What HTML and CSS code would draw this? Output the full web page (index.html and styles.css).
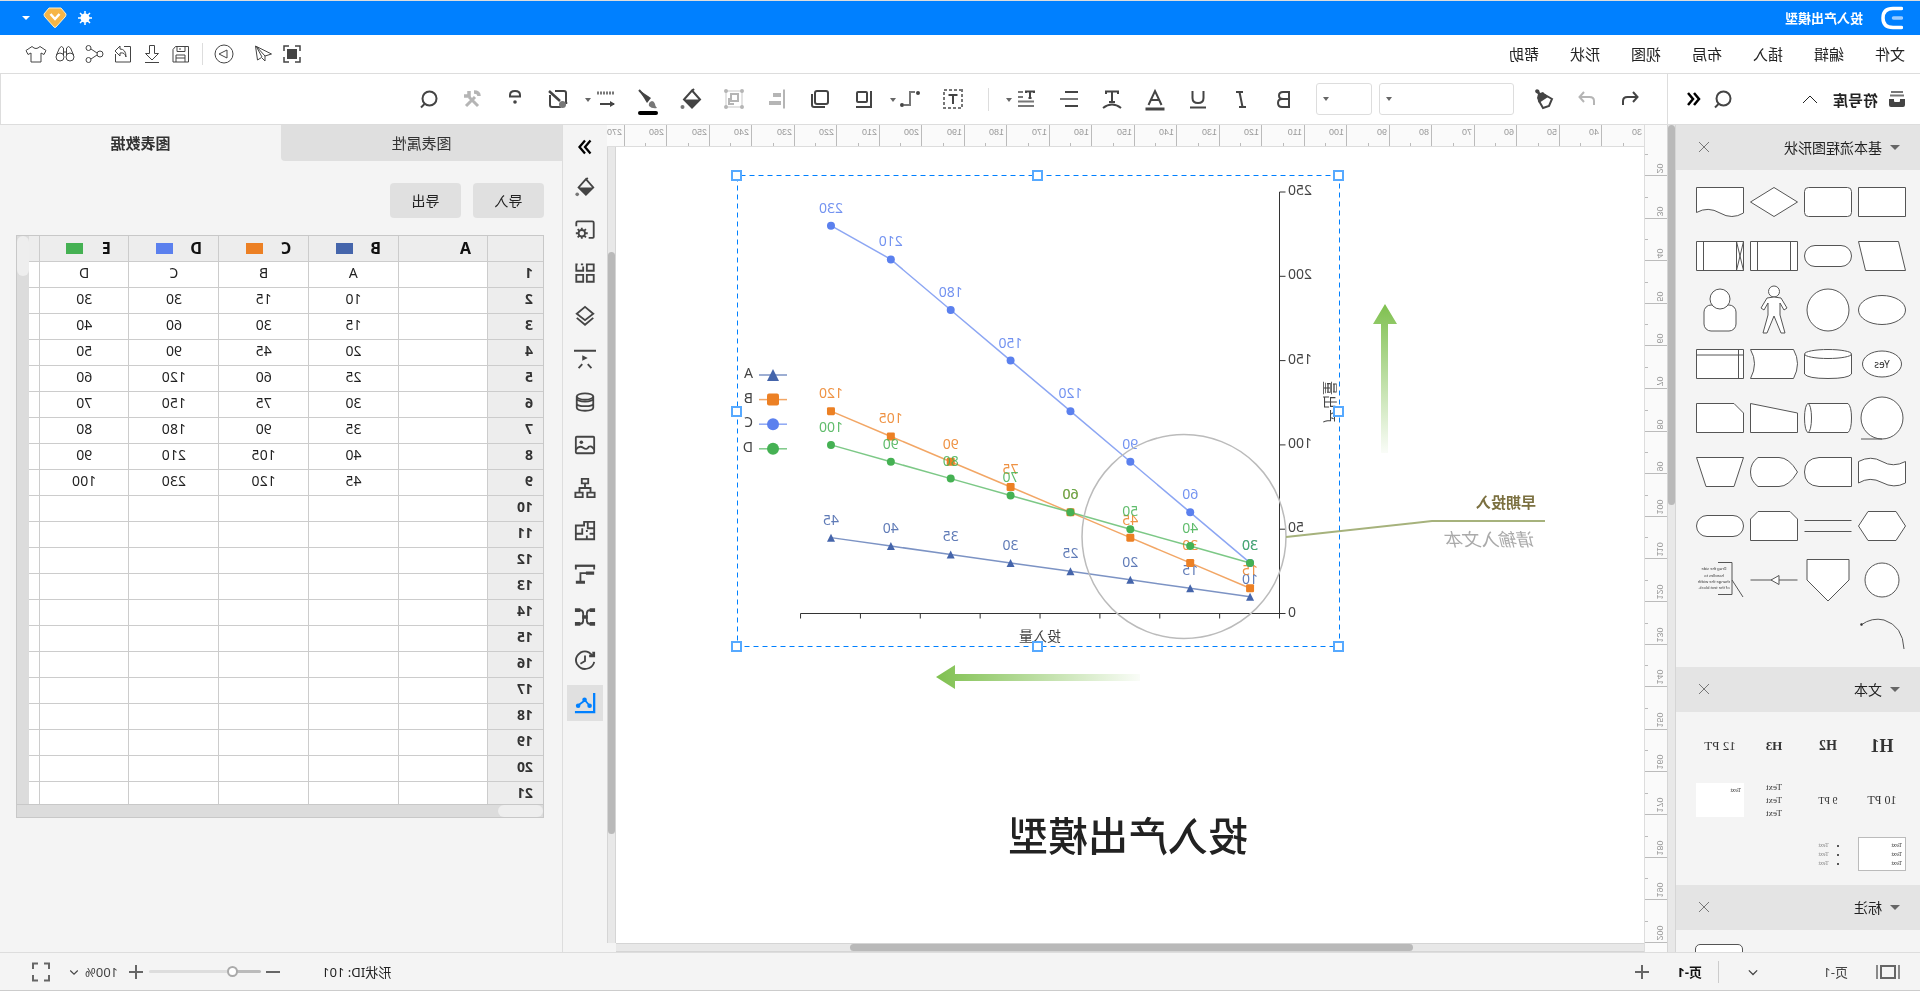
FILE: index.html
```html
<!DOCTYPE html>
<html lang="zh-CN">
<head>
<meta charset="utf-8">
<title>投入产出模型</title>
<link rel="stylesheet" href="styles.css">
</head>
<body>
<svg class="sprite" aria-hidden="true">
  <defs>
    <linearGradient id="gUp" x1="0" y1="0" x2="0" y2="1"><stop offset="0" stop-color="#7fc04f"/><stop offset="1" stop-color="#7fc04f" stop-opacity="0.04"/></linearGradient>
    <linearGradient id="gRight" x1="1" y1="0" x2="0" y2="0"><stop offset="0" stop-color="#7fc04f"/><stop offset="1" stop-color="#7fc04f" stop-opacity="0.04"/></linearGradient>
  </defs>
  <symbol id="i-undo" viewBox="0 0 24 24"><path d="M9 5 4.500 10 9 15M5 10h9.500q4.500 0 4.500 4v4"/></symbol>
  <symbol id="i-redo" viewBox="0 0 24 24"><path d="M15 5 19.500 10 15 15M19 10H9.500Q5 10 5 14v4"/></symbol>
  <symbol id="i-painter" viewBox="0 0 24 24"><path d="M4 12 11 8l6 6-4 7-6-2Z"/><path class="f" d="m8 10 5-5 3 1 1-3q3-2 4 1 0 2-3 3l1 4-2 5Z"/></symbol>
  <symbol id="i-b" viewBox="0 0 24 24"><path d="M7 5h6q4 0 4 3.500T13 12H7ZM7 12h7q4 0 4 4t-4 4H7Z"/></symbol>
  <symbol id="i-i" viewBox="0 0 24 24"><path d="M10 5h7M7 20h7M13.500 5 10.500 20"/></symbol>
  <symbol id="i-u" viewBox="0 0 24 24"><path d="M6.500 4v7q0 5 5.500 5t5.500-5V4M4 20.500h16"/></symbol>
  <symbol id="i-a" viewBox="0 0 24 24"><path d="M5.500 18 12 4l6.500 14M8 13h8"/><path stroke-width="3" d="M2.500 22h19"/></symbol>
  <symbol id="i-tarc" viewBox="0 0 24 24"><path d="M6 7V4.500h12V7M12 4.500V15M9 15h6"/><path d="M3 21q9-7 18 0"/></symbol>
  <symbol id="i-align" viewBox="0 0 24 24"><path d="M3 5h13M3 19h13"/><path class="g" d="M3 12h18"/></symbol>
  <symbol id="i-spacing" viewBox="0 0 24 24"><path d="M4 6V4.500h8V6M8 4.500V11M6.500 11h3"/><path class="g" d="M15 5h5M15 10h5M4 14.500h16M4 19h16"/></symbol>
  <symbol id="i-text" viewBox="0 0 24 24"><path class="g" stroke-dasharray="3 2" d="M3 3h18v18H3Z"/><path d="M7.500 8h9M12 8v9"/></symbol>
  <symbol id="i-conn" viewBox="0 0 24 24"><path class="g" d="M7 5h5v13h6"/><circle class="f" cx="4" cy="6" r="2"/><circle class="f" cx="20" cy="18" r="2"/></symbol>
  <symbol id="i-front" viewBox="0 0 24 24"><rect x="8" y="5" width="10" height="10" rx="1"/><path d="M4 4v16h15"/></symbol>
  <symbol id="i-back" viewBox="0 0 24 24"><rect x="4" y="4" width="13" height="13" rx="2"/><path d="M20 7v11q0 2-2 2H7"/></symbol>
  <symbol id="i-objalign" viewBox="0 0 24 24"><path d="M5 2.500v19"/><path stroke-width="4" d="M8 8h8M8 16h12"/></symbol>
  <symbol id="i-group" viewBox="0 0 24 24"><path opacity=".5" stroke-width="1.500" d="M4 4h16v16H4Z"/><path d="M8 7h7v7H8ZM12 17h5v-6"/><circle cx="4" cy="4" r="1"/><circle cx="20" cy="4" r="1"/><circle cx="4" cy="20" r="1"/><circle cx="20" cy="20" r="1"/></symbol>
  <symbol id="i-fill" viewBox="0 0 24 24"><path d="m9 2 2 2M11 3.500 3 12.500l8 8 8-8Z"/><path class="f" d="M3 12.500h16l-8 8.500Z"/><circle class="gf" cx="20.500" cy="20" r="2"/></symbol>
  <symbol id="i-brush" viewBox="0 0 24 24"><path class="f" d="M21 3 9 11l4 5Z"/><path stroke-width="2" d="m21 3-9 10"/><path class="gf" d="M8 14q4 1 3 5-3 3-8 2 2-2 2-4 1-3 3-3Z"/></symbol>
  <symbol id="i-line" viewBox="0 0 24 24"><path class="g" stroke-width="3" stroke-dasharray="2 1" d="M3 6h18"/><path d="M3 17h14"/><path class="f" d="m1 17 5-3.500v7Z" transform="rotate(180 12 17)" opacity="0"/><path class="f" d="m2 17 5-3v6Z"/></symbol>
  <symbol id="i-edit" viewBox="0 0 24 24"><path d="M15 4H6Q4 4 4 6v9M9 20h9q2 0 2-2V8M20 4v2"/><path stroke-width="2.500" d="M21 4 10 14M4 17v-2"/><circle class="gf" cx="7.500" cy="17.500" r="3.500"/></symbol>
  <symbol id="i-bulb" viewBox="0 0 24 24"><path d="M7 9.500V8q0-4 5-4t5 4v1.500Z"/><circle class="f" cx="12" cy="15" r="1.800"/></symbol>
  <symbol id="i-tools" viewBox="0 0 24 24"><path stroke-width="3" d="m18 19-9-9M6 19l9-9"/><path stroke-width="3.500" d="M5 9q0-4 5-4M15 4v5h5"/></symbol>
  <symbol id="i-search" viewBox="0 0 24 24"><circle cx="11.500" cy="11.500" r="7"/><path d="m16.500 17 3.500 3.500"/></symbol>
  <symbol id="i-dleft" viewBox="0 0 24 24"><path stroke-width="2.500" d="m12 6-5 6 5 6M18 6l-5 6 5 6"/></symbol>
  <symbol id="i-dright" viewBox="0 0 24 24"><path stroke-width="2.500" d="m6 5 6 7-6 7M12 5l6 7-6 7"/></symbol>
  <symbol id="i-up" viewBox="0 0 24 24"><path d="m5 16 7-7 7 7"/></symbol>
  <symbol id="i-down" viewBox="0 0 24 24"><path d="m7 10 5 5 5-5"/></symbol>
  <symbol id="i-x" viewBox="0 0 24 24"><path d="m7 7 10 10M17 7 7 17"/></symbol>
  <symbol id="i-plus" viewBox="0 0 24 24"><path d="M12 5v14M5 12h14"/></symbol>
  <symbol id="i-minus" viewBox="0 0 24 24"><path d="M5 12h14"/></symbol>
  <symbol id="i-drawer" viewBox="0 0 24 24"><path class="gf" d="M6 4h12v2H6ZM5 7.500h14v2H5Z"/><path class="f" d="M4 12h5v2q0 1 1 1h4q1 0 1-1v-2h5v6q0 2-2 2H6q-2 0-2-2Z"/></symbol>
  <symbol id="i-pages" viewBox="0 0 26 24"><path d="M6 6h14v12H6Z"/><path stroke-width="1.500" d="M2 5v14M24 5v14"/></symbol>
  <symbol id="i-full" viewBox="0 0 24 24"><path d="M4 9V3.500h5M15 3.500h5V9M20 15v5.500h-5M9 20.500H4V15"/></symbol>
  <symbol id="i-frame" viewBox="0 0 24 24"><path d="M4 9V4h5M15 4h5v5M20 15v5h-5M9 20H4v-5" stroke-width="1.500"/><path class="f" d="M7 7h10v10H7Z"/></symbol>
  <symbol id="i-send" viewBox="0 0 24 24"><path d="m3.500 12 16-8-2 14-4-2.500-3.500 3.500v-5ZM10 14l9-10-6 11"/></symbol>
  <symbol id="i-play" viewBox="0 0 24 24"><circle cx="12" cy="12" r="9"/><path d="m9 8 8 4-8 4Z"/></symbol>
  <symbol id="i-save" viewBox="0 0 24 24"><path d="M4.500 4.500h13l2.500 3v12.500H4.500ZM8 4.500v5h8v-5M13 6v2M8 20v-7h9v7M8 16h9"/></symbol>
  <symbol id="i-download" viewBox="0 0 24 24"><path d="M9.500 3.500h5v8h4L12 18l-6.500-6.500h4ZM5 20.500h14"/></symbol>
  <symbol id="i-share" viewBox="0 0 24 24"><path d="M11 4.500H4.500V20h15v-8"/><path d="m15 4 5 5-5 5v-3q-5-1-6 4 0-8 6-8Z"/></symbol>
  <symbol id="i-nodes" viewBox="0 0 24 24"><circle cx="6" cy="12" r="3"/><circle cx="17.500" cy="6" r="2.500"/><circle cx="17.500" cy="18" r="2.500"/><path d="m9 11 6-4M9 13l6 4"/></symbol>
  <symbol id="i-glasses" viewBox="0 0 24 24"><circle cx="7" cy="15" r="4"/><circle cx="17" cy="15" r="4"/><path d="m3.500 13 3-7q2-3 4 0v8M20.500 13l-3-7q-2-3-4 0v8M10.500 10h3"/></symbol>
  <symbol id="i-shirt" viewBox="0 0 24 24"><path d="m8 4.500-6 4 2 4 3-1.500v9h10v-9l3 1.500 2-4-6-4q-4 4-8 0Z"/></symbol>
  <symbol id="i-gear" viewBox="0 0 24 24"><path d="M8 20.500H3.500q-1 0-1-1V4q0-1.500 1.500-1.500h16q1.500 0 1.500 1.500v4"/><circle cx="15.500" cy="15.500" r="3.500"/><path d="M15.500 9.500v2M15.500 19.500v2M9 15.500h3M19 15.500h3M11 11l2 2M18 18l2 2M11 20l2-2M18 13l2-2"/></symbol>
  <symbol id="i-grid" viewBox="0 0 24 24"><path d="M2.500 2.500h7.500v7H2.500ZM2.500 14h7.500v7.500H2.500ZM14 14h7.500v7.500H14ZM14 2.500h2.500M20 2.500h1.500v7H14V5"/></symbol>
  <symbol id="i-layers" viewBox="0 0 24 24"><path d="m12 2 9 7.500-9 7-9-7ZM3 14l9 7.500 9-7.500"/></symbol>
  <symbol id="i-theme" viewBox="0 0 24 24"><path d="M0 3h24M5 22l4-4.500M19 22l-4-4.500"/><path class="f" d="m9 11 6-3v6Z"/></symbol>
  <symbol id="i-db" viewBox="0 0 24 24"><ellipse cx="12" cy="6" rx="9" ry="3.500"/><path d="M3 6v12q0 3.500 9 3.500t9-3.500V6M3 13.500q0 3 9 3t9-3M3 8.500q1 3 9 3t9-3"/></symbol>
  <symbol id="i-image" viewBox="0 0 24 24"><rect x="2" y="3" width="20" height="18" rx="1"/><path d="M2 17q3-5 6-3 2 4 6 1 4-3 8 2"/><circle class="f" cx="16" cy="9" r="2"/></symbol>
  <symbol id="i-org" viewBox="0 0 24 24"><path d="M8.500 2h7v5h-7ZM1.500 17h8v5h-8ZM14.500 17h8v5h-8ZM12 7v5M6 16v-4h12v4"/></symbol>
  <symbol id="i-floor" viewBox="0 0 24 24"><path d="M2 2h11v4h9v15H2ZM2 9h7V3M2 15h5M10 13v-2M10 17v4M15 9v5M14 15h7"/></symbol>
  <symbol id="i-gantt" viewBox="0 0 24 24"><path stroke-width="2.500" d="M1 3h22"/><path d="M2 3v4M22 3v4M10 11h7v9"/><path stroke-width="3.500" d="M2 11h9M12 21h10"/></symbol>
  <symbol id="i-mind" viewBox="0 0 24 24"><path d="M5 4.500h2q3 0 3 4v7q0 4-3 4H5M19 4.500h-2q-3 0-3 4v7q0 4 3 4h2"/><path stroke-width="4" d="M9 12h6M1 4.500h6M17 4.500h6M1 19.500h6M17 19.500h6"/></symbol>
  <symbol id="i-clock" viewBox="0 0 24 24"><path d="M4 7q6-7 13-3 7 5 4 12-5 8-13 5-5-2-6-7"/><path stroke-width="3" d="M2.500 3v4.500h5"/><path d="M12 7v6l5 3"/></symbol>
  <symbol id="i-chart" viewBox="0 0 24 24"><path stroke-width="2.500" d="M2 1v21h21"/><path d="m7 15 5-6 8 6"/><circle class="f" cx="7" cy="15" r="2.500"/><circle class="f" cx="12.500" cy="8.500" r="2.500"/><circle class="f" cx="19.500" cy="15" r="2.500"/></symbol>
</svg>

<div class="app">
  <header class="titlebar">
    <svg class="logo" viewBox="0 0 22 24"><path d="M1.500 2.500H10Q20 2.500 20 12T10 21.500H1.500" fill="none" stroke="#fff" stroke-width="3.500" stroke-linecap="round"/><path d="M1.500 12h8" stroke="#9bcbff" stroke-width="3.500" stroke-linecap="round"/></svg>
    <h1 class="doc-name">投入产出模型</h1>
    <div class="title-tools">
      <button class="title-btn" aria-label="主题"><svg width="16" height="16" viewBox="0 0 16 16"><circle cx="8" cy="8" r="4.500" fill="#fff"/><path d="M8 1v14M1 8h14M3 3l10 10M13 3 3 13" stroke="#fff" stroke-width="1.500"/></svg></button>
      <button class="title-btn" aria-label="会员"><svg width="24" height="22" viewBox="0 0 24 22"><path d="M6 1h12l5 6q0 2-1 3L13 20q-1 1-2 0L2 10Q1 9 1 7Z" fill="#f6b547" stroke="#fff0c8"/><path d="m7.500 7 4.500 5 4.500-5" fill="none" stroke="#fff" stroke-width="2.500"/></svg></button>
      <button class="title-btn" aria-label="更多"><span class="caret light"></span></button>
    </div>
  </header>

  <nav class="menubar">
    <div class="menus">
      <button class="menu">文件</button><button class="menu">编辑</button><button class="menu">插入</button><button class="menu">布局</button><button class="menu">视图</button><button class="menu">形状</button><button class="menu">帮助</button>
    </div>
    <div class="quick" id="quick"></div>
  </nav>

  <div class="toolrow">
    <div class="library-head">
      <svg class="icon"><use href="#i-drawer"/></svg>
      <h2 class="library-name">符号库</h2>
      <button class="icon-btn thin" aria-label="收起"><svg class="icon"><use href="#i-up"/></svg></button>
      <button class="icon-btn push" aria-label="搜索"><svg class="icon"><use href="#i-search"/></svg></button>
      <button class="icon-btn black" aria-label="折叠"><svg class="icon"><use href="#i-dleft"/></svg></button>
    </div>
    <div class="toolbar">
      <div class="tools" data-tools="undo:撤销 redo:重做:off painter:格式刷"></div>
      <span class="select-box font"><select aria-label="字体"><option></option></select></span>
      <span class="select-box size"><select aria-label="字号"><option></option></select></span>
      <div class="tools" data-tools="b:加粗 i:斜体 u:下划线 a:字体颜色 tarc:文本样式 align:对齐 spacing:行距:menu"></div>
      <span class="tool-sep"></span>
      <div class="tools" data-tools="text:文本框 conn:连接线:menu front:置于顶层 back:置于底层 objalign:排列:off group:组合:off fill:填充 brush:线条:ink line:线型:menu edit:编辑 bulb:提示 tools:工具:off search:查找"></div>
    </div>
  </div>

  <main class="workspace">
    <aside class="library">
      <div class="library-list">
        <section>
          <header class="section-head"><span class="caret"></span><h3>基本流程图形状</h3><button class="icon-btn close" aria-label="关闭基本流程图形状"><svg class="icon"><use href="#i-x"/></svg></button></header>
          <div class="shapes" id="shapes"></div>
        </section>
        <section>
          <header class="section-head"><span class="caret"></span><h3>文本</h3><button class="icon-btn close" aria-label="关闭文本"><svg class="icon"><use href="#i-x"/></svg></button></header>
          <div class="shapes texts">
            <span class="cell t-h1">H1</span><span class="cell t-h2">H2</span><span class="cell t-h3">H3</span><span class="cell t-12">12 PT</span>
            <span class="cell t-10">10 PT</span><span class="cell t-9">9 PT</span><span class="cell t-lines">Text<br>Text<br>Text</span><span class="cell"><span class="note">Text</span></span>
            <span class="cell"><span class="note framed">Text<br>Text<br>Text</span></span><span class="cell"><ul class="bullets"><li>Text</li><li>Text</li><li>Text</li></ul></span>
          </div>
        </section>
        <section>
          <header class="section-head"><span class="caret"></span><h3>标注</h3><button class="icon-btn close" aria-label="关闭标注"><svg class="icon"><use href="#i-x"/></svg></button></header>
          <div class="callouts"><span class="callout"></span></div>
        </section>
      </div>
      <div class="scroll-y library-scroll"><span class="thumb"></span></div>
    </aside>

    <svg class="ruler-y" id="rulerY"></svg>
    <div class="stage">
      <svg class="ruler-x" id="rulerX"></svg>
      <div class="stage-mid">
        <svg class="canvas" id="canvas"></svg>
        <div class="scroll-y stage-scroll"><span class="thumb"></span></div>
      </div>
      <div class="scroll-x-row"><div class="scroll-x"><span class="thumb"></span></div></div>
    </div>

    <nav class="rail" id="rail"></nav>

    <aside class="inspector">
      <div class="tabs" role="tablist"><button class="tab" role="tab">图表属性</button><button class="tab active" role="tab" aria-selected="true">图表数据</button></div>
      <div class="actions"><button class="action">导入</button><button class="action">导出</button></div>
      <div class="sheet">
        <div class="sheet-top">
          <div class="sheet-view"><table id="sheet"></table></div>
          <div class="sheet-vscroll"><span></span></div>
        </div>
        <div class="sheet-hscroll"><span></span></div>
      </div>
    </aside>
  </main>

  <footer class="statusbar">
    <button class="icon-btn pages" aria-label="页面列表"><svg class="icon wide"><use href="#i-pages"/></svg></button>
    <button class="page-pick"><span>页-1</span><svg class="icon small"><use href="#i-down"/></svg></button>
    <button class="page-tab">页-1</button>
    <button class="icon-btn add" aria-label="新增页面"><svg class="icon"><use href="#i-plus"/></svg></button>
    <div class="status-right">
      <span class="shape-id">形状ID: 101</span>
      <button class="icon-btn" aria-label="缩小"><svg class="icon"><use href="#i-minus"/></svg></button>
      <input class="zoom" type="range" min="0" max="100" value="23" aria-label="缩放">
      <button class="icon-btn" aria-label="放大"><svg class="icon"><use href="#i-plus"/></svg></button>
      <button class="zoom-value"><span>100%</span><svg class="icon tiny"><use href="#i-down"/></svg></button>
      <button class="icon-btn fit" aria-label="全屏"><svg class="icon"><use href="#i-full"/></svg></button>
    </div>
  </footer>
</div>
<script src="script.js"></script>
</body>
</html>
```

FILE: styles.css
```css
* { box-sizing: border-box; }
html, body { margin: 0; height: 100%; }
body {
  overflow: hidden;
  background: #fff;
  color: #222;
  font-family: "Noto Sans", "Noto Sans CJK SC", sans-serif;
  font-size: 14px;
}
button, select, input { font: inherit; color: inherit; margin: 0; }
button { padding: 0; border: 0; background: none; }
h1, h2, h3, ul { margin: 0; padding: 0; font-size: inherit; font-weight: inherit; }
.sprite { position: absolute; width: 0; height: 0; }

.app {
  display: flex;
  flex-direction: column;
  height: 100vh;
  transform: scaleX(-1);
}

.icon { display: block; width: 24px; height: 24px; fill: none; stroke: currentColor; stroke-width: 2; }
.icon.wide { width: 26px; }
.icon.small { width: 20px; height: 20px; }
.icon.tiny { width: 18px; height: 18px; }
.f { fill: currentColor; stroke: none; }
.g { stroke: #777; }
.gf { fill: #777; stroke: none; }
.icon-btn { display: flex; align-items: center; justify-content: center; color: #444; }
.caret { width: 0; height: 0; border: 5px solid transparent; border-top-color: #666; border-bottom: 0; }
.caret.light { border-width: 4px 4px 0; border-top-color: #fff; }

.titlebar {
  display: flex;
  align-items: center;
  height: 35px;
  padding: 0 22px 0 17px;
  border-top: 1px solid #ddd;
  background: #0080ff;
  color: #fff;
  flex: none;
}
.logo { width: 22px; height: 24px; }
.doc-name { margin-left: 18px; font-size: 13px; line-height: 18px; font-weight: 700; padding-bottom: 1px; }
.title-tools { display: flex; align-items: center; gap: 10px; margin-left: auto; padding-bottom: 1px; }
.title-btn { display: flex; }
.title-btn:last-child { margin-left: 7px; }
.title-btn .caret.light { margin-left: 0; }
.title-tools .title-btn:nth-child(2) { margin-right: 0; }
.titlebar .title-btn:last-child { margin-left: 3px; }

.menubar {
  display: flex;
  align-items: center;
  justify-content: space-between;
  height: 39px;
  padding: 0 24px 0 15px;
  border-bottom: 1px solid #ddd;
  flex: none;
}
.menus { display: flex; gap: 31px; font-size: 15px; }
.menu { line-height: 20px; padding-bottom: 1px; }
.quick { display: flex; align-items: center; gap: 5px; color: #666; }
.quick .icon { stroke-width: 1; }
.quick-sep { width: 1px; height: 22px; margin: 0 4px; background: #ddd; }

.toolrow { display: flex; height: 51px; border-bottom: 1px solid #ddd; flex: none; }
.library-head {
  display: flex;
  align-items: center;
  width: 253px;
  padding: 0 14px 0 11px;
  border-right: 1px solid #ddd;
  color: #444;
  flex: none;
}
.library-name { margin: 0 11px 0 7px; font-size: 15px; font-weight: 700; color: #222; }
.push { margin-left: auto; margin-right: 5px; }
.black { color: #000; }
.thin { color: #222; }
.thin .icon { stroke-width: 1; }
.toolbar { display: flex; align-items: center; flex: 1; padding-left: 15px; border-right: 1px solid #ddd; }
.tools { display: flex; }
.tool { position: relative; width: 43px; display: flex; justify-content: center; color: #444; }
.tool.off { color: #b5b5b5; }
.tool.menu-tool { width: 47px; padding-right: 4px; }
.tool .caret { position: absolute; right: 5px; top: 11px; border-width: 4px 3px 0; }
.tool.ink::after { content: ""; position: absolute; left: 12px; right: 11px; top: 24px; height: 4px; border-radius: 2px; background: #000; }
.select-box { position: relative; height: 32px; }
.select-box::after { content: ""; position: absolute; right: 7px; top: 14px; border: 3px solid transparent; border-top: 4px solid #666; border-bottom: 0; pointer-events: none; }
.select-box select { appearance: none; width: 100%; height: 100%; border: 1px solid #ddd; border-radius: 3px; background: #fff; }
.font { width: 135px; margin: 0 7px 0 9px; }
.size { width: 56px; margin-right: 10px; }
.tool-sep { width: 1px; height: 23px; margin: 0 13px 0 12px; background: #ddd; }

.workspace { display: flex; flex: 1; min-height: 0; }
.library { display: flex; width: 253px; background: #f4f4f4; flex: none; }
.library-list { flex: 1; overflow: hidden; }
.section-head { display: flex; align-items: center; height: 45px; padding: 0 16px 1px 20px; background: #e4e4e4; }
.section-head h3 { margin-left: 8px; }
.close { margin-left: auto; color: #777; }
.close .icon { stroke-width: 1; }
.shapes { display: grid; grid-template-columns: repeat(4, 54px); grid-auto-rows: 54px; padding: 5px 0 6px 11px; }
.shape { width: 48px; height: 50px; margin: auto; overflow: visible; fill: #fff; stroke: #555; }
.shape .n { fill: none; }
.shape text { fill: #333; stroke: none; text-anchor: middle; }
.yes { font-size: 10px; }
.micro { font-size: 4px; }
.texts { padding: 7px 0 4px 11px; font-family: "Liberation Serif", serif; color: #333; }
.cell { display: flex; align-items: center; justify-content: center; white-space: nowrap; }
.t-h1 { font-size: 18px; font-weight: 700; }
.t-h2 { font-size: 14px; font-weight: 700; }
.t-h3 { font-size: 13px; font-weight: 700; }
.t-12 { font-size: 13px; }
.t-10 { font-size: 12px; }
.t-9 { font-size: 10px; }
.t-lines { font-size: 9px; line-height: 13px; }
.note { width: 48px; height: 34px; padding: 3px; background: #fff; font-size: 6px; line-height: 9px; }
.framed { border: 1px solid #bbb; }
.bullets { font-size: 6px; line-height: 9px; padding-left: 9px; color: #888; }
.bullets li::marker { color: #222; }
.callouts { display: flex; justify-content: flex-end; padding: 14px 19px 0 0; }
.callout { width: 48px; height: 30px; border: 1px solid #555; border-radius: 5px; background: #fff; }

.scroll-y { display: flex; flex-direction: column; width: 9px; border: 1px solid #d5d5d5; border-width: 0 1px; background: #e8e8e8; flex: none; }
.thumb { display: block; background: #b9b9b9; border-radius: 4px; }
.library-scroll .thumb { height: 380px; }
.stage-scroll { padding-top: 105px; }
.stage-scroll .thumb { height: 582px; }

.ruler-y { width: 23px; height: 100%; border-right: 1px solid #ddd; background: #fafafa; flex: none; }
.stage { display: flex; flex-direction: column; flex: 1; min-width: 0; }
.ruler-x { width: 100%; height: 22px; border-bottom: 1px solid #ddd; background: #fafafa; flex: none; }
.ruler-x text, .ruler-y text { fill: #999; font-family: "Liberation Sans", sans-serif; font-size: 9px; }
.ruler-x path, .ruler-y path { stroke: #bbb; fill: none; }
.stage-mid { display: flex; flex: 1; min-height: 0; }
.canvas { flex: 1; min-width: 0; height: 100%; background: #fff; font-size: 14px; }
.scroll-x-row { padding-right: 9px; background: #f4f4f4; flex: none; }
.scroll-x { height: 9px; padding-left: 231px; border: 1px solid #d5d5d5; border-width: 1px 0; background: #e8e8e8; }
.scroll-x .thumb { width: 563px; height: 7px; }

.ink-text { fill: #444; }
.axis { stroke: #333; fill: none; }
.series-line { fill: none; stroke-width: 1.500; opacity: .7; }
.series-text { opacity: .85; text-anchor: middle; }
.mid { text-anchor: middle; }
.end { text-anchor: end; }
.select-line { fill: none; stroke: #0080ff; stroke-dasharray: 5 4; }
.handle { fill: #fff; stroke: #56a9ff; stroke-width: 2; }
.lens { fill: none; stroke: #bbb; stroke-width: 1.500; }
.leader { fill: none; stroke: #a6b27c; stroke-width: 2; }
.early { fill: #7b7040; font-size: 15px; font-weight: 700; }
.hint { fill: #aaa; font-size: 18px; font-style: italic; }
.headline { fill: #222; font-size: 40px; font-weight: 500; }

.rail { display: flex; flex-direction: column; align-items: center; gap: 7px; width: 45px; padding-top: 7px; border-right: 1px solid #ddd; background: #f4f4f4; flex: none; }
.rail-btn { display: flex; align-items: center; justify-content: center; width: 36px; height: 36px; color: #444; flex: none; }
.rail-btn:first-child { height: 30px; color: #000; }
.rail-btn .icon { width: 22px; height: 22px; }
.rail-btn.active { background: #e0e0e0; color: #0080ff; }

.inspector { width: 562px; background: #f4f4f4; flex: none; }
.tabs { display: flex; height: 36px; }
.tab { flex: 1; padding-bottom: 2px; background: #dfdfdf; border-bottom-right-radius: 4px; font-size: 15px; color: #333; }
.tab.active { background: none; font-weight: 700; }
.actions { display: flex; gap: 12px; padding: 22px 18px 17px; }
.action { width: 71px; height: 35px; padding-bottom: 2px; border-radius: 4px; background: #e0e0e0; }
.sheet { margin: 0 16px 0 18px; border: 1px solid #c8c8c8; }
.sheet-top { display: flex; height: 568px; }
.sheet-view { flex: 1; min-width: 0; overflow: hidden; background: #fff; }
.sheet-view table { width: 594px; table-layout: fixed; border-collapse: collapse; line-height: 20px; }
.sheet-view th, .sheet-view td { height: 26px; padding: 0 0 2px; border: 1px solid #ccc; border-width: 0 1px 1px 0; text-align: center; }
.sheet-view th { background: #ededed; }
.sheet-view thead th { height: 25px; padding: 0; }
.sheet-view tbody th { padding-left: 10px; text-align: left; color: #333; }
.sheet-view .corner { width: 55px; }
.col-label { display: flex; align-items: center; font-size: 16px; line-height: 20px; color: #111; }
.col-name { width: 44px; }
.swatch { width: 17px; height: 11px; margin-left: 1px; }
.swatch-a { background: #4565ab; }
.swatch-b { background: #ec8024; }
.swatch-c { background: #5b80ee; }
.swatch-d { background: #45b153; }
.sheet-vscroll { width: 12px; background: #dcdcdc; }
.sheet-vscroll span { display: block; height: 40px; border-radius: 6px; background: #eee; }
.sheet-hscroll { height: 13px; border-top: 1px solid #c8c8c8; background: #dcdcdc; }
.sheet-hscroll span { display: block; width: 45px; height: 12px; border-radius: 6px; background: #eee; }

.statusbar { display: flex; align-items: center; height: 39px; padding: 0 29px 0 19px; border-top: 1px solid #ddd; border-bottom: 1px solid #ccc; background: #f4f4f4; font-size: 13px; color: #444; flex: none; }
.pages { color: #666; }
.page-pick { display: flex; align-items: center; justify-content: space-between; width: 157px; height: 22px; padding: 0 24px 0 27px; border-right: 1px solid #ccc; }
.page-pick .icon, .zoom-value .icon { stroke-width: 1.500; }
.page-tab { margin: 0 23px 0 16px; font-weight: 700; color: #111; }
.add, .status-right .icon-btn { color: #666; }
.status-right { display: flex; align-items: center; margin-left: auto; }
.shape-id { margin-right: 37px; color: #222; }
.zoom { appearance: none; width: 112px; height: 3px; margin: 0 1px 0 0; border-radius: 2px; background: linear-gradient(to right, #bbb 26%, #ddd 26%); }
.zoom::-webkit-slider-thumb { appearance: none; width: 11px; height: 11px; border: 2px solid #aaa; border-radius: 50%; background: #fff; }
.zoom-value { display: flex; align-items: center; gap: 2px; margin-left: 6px; }
.fit { margin-left: 12px; }
```

FILE: script.js
```js
const icon = (id) => `<svg class="icon"><use href="#i-${id}"/></svg>`;
const el = (id) => document.getElementById(id);

document.querySelectorAll("[data-tools]").forEach((box) => {
  box.innerHTML = box.dataset.tools.split(" ").map((item) => {
    const [id, label, mode] = item.split(":");
    const cls = { off: " off", menu: " menu-tool", ink: " ink" }[mode] || "";
    const caret = mode === "menu" ? '<span class="caret"></span>' : "";
    return `<button class="tool${cls}" aria-label="${label}">${icon(id)}${caret}</button>`;
  }).join("");
});

const quickItem = ([id, label]) => `<button class="icon-btn" aria-label="${label}">${icon(id)}</button>`;
el("quick").innerHTML =
  [["frame", "演示"], ["send", "发送"]].map(quickItem).join("") +
  '<span></span><span></span>' +
  quickItem(["play", "播放"]) + '<span class="quick-sep"></span>' +
  [["save", "保存"], ["download", "下载"], ["share", "导出"], ["nodes", "分享"], ["glasses", "查找"], ["shirt", "主题"]].map(quickItem).join("");

const rail = [["dright", "折叠"], ["fill", "样式"], ["gear", "页面设置"], ["grid", "符号"], ["layers", "图层"], ["theme", "演示"], ["db", "数据"], ["image", "图片"], ["org", "组织结构"], ["floor", "平面图"], ["gantt", "甘特图"], ["mind", "思维导图"], ["clock", "历史"], ["chart", "图表"]];
el("rail").innerHTML = rail.map(([id, label]) => `<button class="rail-btn${id === "chart" ? " active" : ""}" aria-label="${label}">${icon(id)}</button>`).join("");

const shapes = [
  '<path d="M.5 10.500h47v29H.5Z"/>',
  '<rect x=".5" y="10.500" width="47" height="29" rx="4"/>',
  '<path d="M24 10.500 47.500 25 24 39.500.5 25Z"/>',
  '<path d="M.5 10.500h47V35.500Q36 29 24 36T.5 36Z"/>',
  '<path d="M7.500 10.500h40l-7 29H.5Z"/>',
  '<rect x=".5" y="14.500" width="47" height="21" rx="10.500"/>',
  '<path d="M.5 10.500h47v29H.5ZM7.500 10.500v29M40.500 10.500v29"/>',
  '<path d="M.5 10.500h47v29H.5ZM7.500 10.500v29M40.500 10.500v29M.5 10.500l7 29M7.500 10.500l-7 29"/>',
  '<ellipse cx="24" cy="25" rx="23.500" ry="14.500"/>',
  '<circle cx="24" cy="25" r="21"/>',
  '<circle cx="24" cy="6.500" r="5.500"/><path d="M17 13q7-2 14 0l6 10-3 2-4-7v12l5 18h-4l-7-17-7 17h-4l5-18V18l-4 7-3-2Z"/>',
  '<rect x="8" y="20" width="32" height="26" rx="7"/><circle cx="24" cy="14" r="10"/>',
  '<ellipse cx="24" cy="25" rx="19.500" ry="13"/><text class="yes" x="24" y="29">Yes</text>',
  '<path d="M.5 15v20q3 4.500 23.500 4.500T47.500 35V15"/><ellipse cx="24" cy="15" rx="23.500" ry="4.500"/>',
  '<path d="M4.500 10.500h43q-8 14 0 29h-43q-8-15 0-29Z"/>',
  '<path d="M.5 10.500h47v29H.5ZM5.500 10.500v29M.5 16h47"/>',
  '<circle cx="24" cy="25" r="21"/><path d="M24 46h21"/>',
  '<path d="M4 10.500h40v29H4q-3.500-3-3.500-14.500T4 10.500Z"/><ellipse cx="44" cy="25" rx="3.500" ry="14.500"/>',
  '<path d="M.5 20 47.500 10.500v29H.5Z"/>',
  '<path d="M.5 20 10 10.500h37.500v29H.5Z"/>',
  '<path d="M.5 14.500Q13 21 24 14.500T47.500 14.500V36Q36 29 24 35.500T.5 36Z"/>',
  '<path d="M.5 10.500H33q14.500 1 14.500 14.500T33 39.500H.5Z"/>',
  '<path d="M.5 25Q9 10.500 19 10.500h21Q47.500 16 47.500 25T40 39.500H19Q9 39.500.5 25Z"/>',
  '<path d="M.5 10.500h47l-9.500 29H10Z"/>',
  '<path d="M10 10.500h28L47.500 25 38 39.500H10L.5 25Z"/>',
  '<path d="M.5 19.500h47M.5 30.500h47"/>',
  '<path d="M8 10.500h32l7.500 7.500v21.500H.5V18Z"/>',
  '<rect x=".5" y="14.500" width="47" height="21" rx="10.500"/>',
  '<circle cx="24" cy="25" r="17"/>',
  '<path d="M3 4.500h42V25L24 46 3 25Z"/>',
  '<path d="M.5 25h47"/><path d="M19 20.500v9l8-4.500Z"/>',
  '<path class="n" d="M26 7.500H12v32h14M12 25 1 42"/><text class="micro" x="30" y="15">Drag the side</text><text class="micro" x="30" y="22">handles to</text><text class="micro" x="30" y="28">change the width</text><text class="micro" x="30" y="34">of the text block.</text>',
  '<path class="n" d="M2 40Q3 17 22 11q12-3 23 5"/><circle cx="44.500" cy="15.500" r="1" fill="#333"/>'
];
el("shapes").innerHTML = shapes.map((s) => `<svg class="shape" viewBox="0 0 48 50">${s}</svg>`).join("");

/* Rulers */
const STEP = 42.5;
const rulerX = el("rulerX"), rulerY = el("rulerY");
const widthX = rulerX.getBoundingClientRect().width;
const heightY = rulerY.getBoundingClientRect().height;
let marks = "", labels = "";
for (let v = 30; (v - 30) / 10 * STEP < widthX - 12; v += 10) {
  const x = Math.round((v - 30) / 10 * STEP) - 0.5;
  marks += `M${x} 0V21M${x + 21} 18V21`;
  labels += `<text x="${x + 2.5}" y="10">${v}</text>`;
}
rulerX.innerHTML = `<path d="${marks}"/>${labels}`;
marks = labels = "";
for (let v = 20; 50 + (v - 20) / 10 * 42.6 < heightY; v += 10) {
  const y = Math.round(50 + (v - 20) / 10 * 42.6) + 0.5;
  marks += `M0 ${y}H22M19 ${y - 21}H22`;
  labels += `<text transform="translate(10 ${y - 2}) rotate(-90)">${v}</text>`;
}
rulerY.innerHTML = `<path d="${marks}"/>${labels}`;

/* Chart */
const series = [
  { name: "A", color: "#4565ab", mark: "tri", values: [10, 15, 20, 25, 30, 35, 40, 45] },
  { name: "B", color: "#ec8024", mark: "box", values: [15, 30, 45, 60, 75, 90, 105, 120] },
  { name: "C", color: "#5b80ee", mark: "dot", values: [30, 60, 90, 120, 150, 180, 210, 230] },
  { name: "D", color: "#45b153", mark: "dot", values: [30, 40, 50, 60, 70, 80, 90, 100] }
];
const X0 = 640.5, Y0 = 613.5, STEP_X = 59.87, UNIT = 1.686;
const px = (i) => X0 + STEP_X * (i + 0.5) - 0.5;
const py = (v) => Y0 - v * UNIT;
const mark = (kind, x, y, r, color) => {
  if (kind === "tri") return `<path d="M${x} ${y - r}l${r} ${r * 2}h${-r * 2}Z" fill="${color}"/>`;
  if (kind === "box") return `<rect x="${x - r}" y="${y - r}" width="${r * 2}" height="${r * 2}" rx="${r / 3}" fill="${color}"/>`;
  return `<circle cx="${x}" cy="${y}" r="${r}" fill="${color}"/>`;
};
let art = "";
let axis = `M${X0} ${py(250)}V${Y0 + 5}M${X0} ${Y0}H${X0 + STEP_X * 8}`;
for (let v = 0; v <= 250; v += 50) {
  axis += `M${X0} ${py(v)}h-6`;
  art += `<text class="ink-text end" x="632" y="${py(v) + 3}">${v}</text>`;
}
for (let i = 1; i <= 8; i++) axis += `M${X0 + STEP_X * i} ${Y0}v5`;
art += `<path class="axis" d="${axis}"/>`;
series.forEach((s, n) => {
  art += `<polyline class="series-line" stroke="${s.color}" points="${s.values.map((v, i) => px(i) + "," + py(v)).join(" ")}"/>`;
  s.values.forEach((v, i) => {
    art += mark(s.mark, px(i), py(v), 4, s.color);
    art += `<text class="series-text" fill="${s.color}" x="${px(i)}" y="${py(v) - 13}">${v}</text>`;
  });
  const y = 375 + n * 24.6;
  art += `<path class="series-line" stroke="${s.color}" d="M1133 ${y}h28"/>${mark(s.mark, 1147, y, 6, s.color)}<text class="ink-text" x="1167" y="${y + 3}">${s.name}</text>`;
});
art += '<text class="ink-text mid" x="880" y="641">投入量</text>';
art += '<text class="ink-text mid" transform="translate(595 402) rotate(-90)">产出量</text>';
art += '<circle class="lens" cx="736" cy="536.5" r="102"/><path class="leader" d="M634 537 488 521H375"/>';
art += '<text class="early" x="384" y="508">早期投入</text><text class="hint" x="384" y="546">请输入文本</text>';
art += '<path fill="url(#gUp)" d="M535 304l12 20h-8v129h-7V324h-9Z"/><path fill="url(#gRight)" d="M984 677l-19 12v-8H780v-7h185v-9Z"/>';
art += '<text class="headline mid" x="792" y="851">投入产出模型</text>';
art += '<path class="select-line" d="M580.500 175.500H1182.500V646.500H580.500Z"/>';
[[581, 175], [882, 175], [1183, 175], [581, 411], [1183, 411], [581, 646], [882, 646], [1183, 646]].forEach(([x, y]) => {
  art += `<rect class="handle" x="${x - 4}" y="${y - 4}" width="9" height="9"/>`;
});
el("canvas").innerHTML = `<g transform="translate(-276 -147)">${art}</g>`;

/* Data sheet */
const letters = ["A", "B", "C", "D", "E", "F"];
let rows = '<thead><tr><th class="corner"></th>' + letters.map((l, i) => {
  if (i === 5) return "<th></th>";
  const swatch = i > 0 ? `<span class="swatch swatch-${"abcd"[i - 1]}"></span>` : "";
  return `<th scope="col"><span class="col-label"><span class="col-name">${l}</span>${swatch}</span></th>`;
}).join("") + "</tr></thead><tbody>";
for (let r = 1; r <= 21; r++) {
  const cells = letters.map((l, i) => {
    const s = series[i - 1];
    if (!s || r > 9) return "<td></td>";
    return `<td>${r === 1 ? s.name : s.values[r - 2]}</td>`;
  }).join("");
  rows += `<tr><th scope="row">${r}</th>${cells}</tr>`;
}
el("sheet").innerHTML = rows + "</tbody>";
```
